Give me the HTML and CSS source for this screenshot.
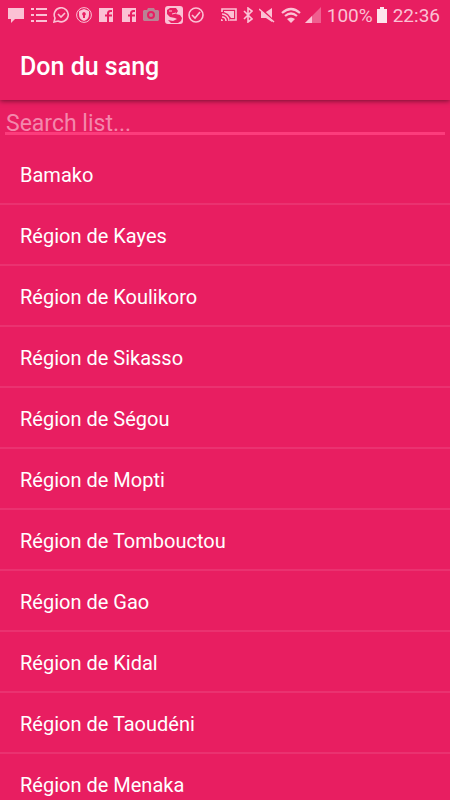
FILE: index.html
```
<!DOCTYPE html>
<html lang="fr">
<head>
    <meta charset="UTF-8">
    <meta name="viewport" content="width=device-width, initial-scale=1.0">
    <title>Don du sang</title>
    <link rel="stylesheet" href="styles.css">
</head>
<body>
    <!-- Status bar -->
    <div class="status-bar">
        <div class="notifications">
            <svg class="icon" viewBox="0 0 16 16"><path d="M0 1h16v11H7l-4 4v-4H0z"/></svg>
            <svg class="icon" viewBox="0 0 16 16"><path d="M0 1h3v2H0zM5 1h11v2H5zM0 7h3v2H0zM5 7h11v2H5zM0 13h3v2H0zM5 13h11v2H5z"/></svg>
            <svg class="icon line" viewBox="0 0 16 16"><path d="M1 15l1-4a7 7 0 1 1 3 3zM5 7l3 3 4-4"/></svg>
            <svg class="icon" viewBox="0 0 16 16"><circle class="thin" cx="8" cy="8" r="7.4"/><path fill-rule="evenodd" d="M8 2l5 2v4c0 3-2 5-5 6-3-1-5-3-5-6V4zM8 5a2 2 0 0 0-1 3.600L7 11h2V8.600A2 2 0 0 0 8 5z"/></svg>
            <svg class="icon" viewBox="0 0 16 16"><path d="M1 1h14v14H1z"/><path class="notch" d="M14 4h-1.500Q10 4 10 6.500V15M7 8.500h7"/></svg>
            <svg class="icon" viewBox="0 0 16 16"><path d="M1 1h14v14H1z"/><path class="notch" d="M14 4h-1.500Q10 4 10 6.500V15M7 8.500h7"/></svg>
            <svg class="icon camera" viewBox="0 0 16 16"><path fill-rule="evenodd" d="M1 3h3l1-2h6l1 2h3l1 1v9l-1 1H1l-1-1V4zM8 4a4 4 0 1 0 0 8 4 4 0 0 0 0-8zM8 6a2 2 0 1 1 0 4 2 2 0 0 1 0-4z"/></svg>
            <svg class="icon wide" viewBox="0 0 18 18"><rect width="18" height="18" rx="3"/><path class="cut" d="M2 4l3-2h6l2 3-2 3 4 1 2 3-1 3-3 2H6l-3-3 5 1 4-2-2-1-5-1-3-3z"/><path class="mark" d="M4 5h3M7 8l4-1"/></svg>
            <svg class="icon line" viewBox="0 0 16 16"><circle cx="8" cy="8" r="7"/><path d="M4 8l3 3 5-6"/></svg>
        </div>
        <div class="system">
            <svg class="icon" viewBox="0 0 16 16"><path class="stroke" d="M1 5V2h14v11H9M1 7a7 7 0 0 1 7 7M1 10a4 4 0 0 1 4 4"/><path d="M0 12a2 2 0 0 1 2 2H0zM3 4h10v7h-3L7 7 3 5z"/></svg>
            <svg class="icon bluetooth" viewBox="0 0 10 16"><path class="stroke" d="M1 4l8 8-4 3V1l4 3-8 8"/></svg>
            <svg class="icon" viewBox="0 0 16 16"><path d="M2 5h5l6-4v14l-6-4H2z"/><path class="gap" d="M0 0l16 15"/><path class="stroke" d="M0 2l15 13"/></svg>
            <svg class="icon wifi" viewBox="0 0 20 16"><path class="wave" d="M1 6q9-8 18 0M4 9q6-5 12 0"/><path d="M6 12q4-3 8 0l-4 4z"/></svg>
            <svg class="icon" viewBox="0 0 16 16"><path class="dim" d="M16 0v16H0z"/><path d="M7 9v7H0z"/></svg>
            <span class="level">100%</span>
            <svg class="icon battery" viewBox="0 0 10 16"><path d="M3 0h4v2h3v14H0V2h3z"/></svg>
            <span class="clock">22:36</span>
        </div>
    </div>

    <!-- Toolbar -->
    <header class="toolbar">
        <h1>Don du sang</h1>
    </header>

    <!-- Region list -->
    <main>
        <form class="search">
            <input type="text" id="search" name="search" placeholder="Search list..." aria-label="Search list">
        </form>
        <ul class="regions">
            <li><a href="#bamako">Bamako</a></li>
            <li><a href="#kayes">Région de Kayes</a></li>
            <li><a href="#koulikoro">Région de Koulikoro</a></li>
            <li><a href="#sikasso">Région de Sikasso</a></li>
            <li><a href="#segou">Région de Ségou</a></li>
            <li><a href="#mopti">Région de Mopti</a></li>
            <li><a href="#tombouctou">Région de Tombouctou</a></li>
            <li><a href="#gao">Région de Gao</a></li>
            <li><a href="#kidal">Région de Kidal</a></li>
            <li><a href="#taoudeni">Région de Taoudéni</a></li>
            <li><a href="#menaka">Région de Menaka</a></li>
        </ul>
    </main>
</body>
</html>
```
FILE: styles.css
```
* {
    box-sizing: border-box;
}

html {
    scrollbar-width: none;
}

body {
    margin: 0;
    font-family: Roboto, sans-serif;
    background-color: #e81e61;
    color: #fff;
}

.status-bar {
    display: flex;
    justify-content: space-between;
    height: 32px;
    padding: 0 10px 2px 8px;
    color: #fbc1d4;
    font-size: 19px;
}

.notifications {
    display: flex;
    align-items: center;
    justify-content: space-between;
    width: 196px;
}

.system {
    display: flex;
    align-items: center;
    gap: 6px;
}

.icon {
    width: 16px;
    height: 16px;
    flex: none;
    fill: currentColor;
}

.wide {
    width: 18px;
    height: 18px;
    margin: 0 -1px;
}

.bluetooth,
.battery {
    width: 10px;
}

.battery {
    margin-left: -2px;
    color: #fde4ec;
}

.wifi {
    width: 20px;
    margin-right: -2px;
}

.camera {
    color: #b98394;
}

.line,
.stroke,
.thin,
.wave,
.mark {
    fill: none;
    stroke: currentColor;
    stroke-width: 1.6;
}

.thin {
    stroke-width: 1;
}

.wave {
    stroke-width: 2.2;
}

.mark {
    stroke-width: 1;
}

.cut {
    fill: #e81e61;
}

.notch,
.gap {
    fill: none;
    stroke: #e81e61;
    stroke-width: 2;
}

.dim {
    opacity: 0.4;
}

.toolbar {
    display: flex;
    align-items: center;
    height: 68px;
    padding: 0 20px;
    box-shadow: 0 1px 5px rgba(0, 0, 0, 0.5);
    clip-path: inset(0 0 -8px);
}

.toolbar h1 {
    margin: 0;
    font-size: 25px;
    font-weight: 500;
}

.search {
    padding: 8px 5px 9px;
}

.search input {
    display: block;
    width: 100%;
    height: 27px;
    padding: 6px 1px 0;
    border: none;
    border-bottom: 3px solid #fc3c7c;
    background: none;
    color: #fff;
    font-family: inherit;
    font-size: 23px;
    line-height: 20px;
    outline: none;
}

.search input::placeholder {
    color: #f487ac;
    opacity: 1;
}

.regions {
    margin: 0;
    padding: 0;
    list-style: none;
}

.regions a {
    display: flex;
    align-items: center;
    height: 61px;
    padding: 2px 20px 0;
    border-bottom: 2px solid #ea3270;
    color: #fff;
    font-size: 20px;
    text-decoration: none;
}
```
